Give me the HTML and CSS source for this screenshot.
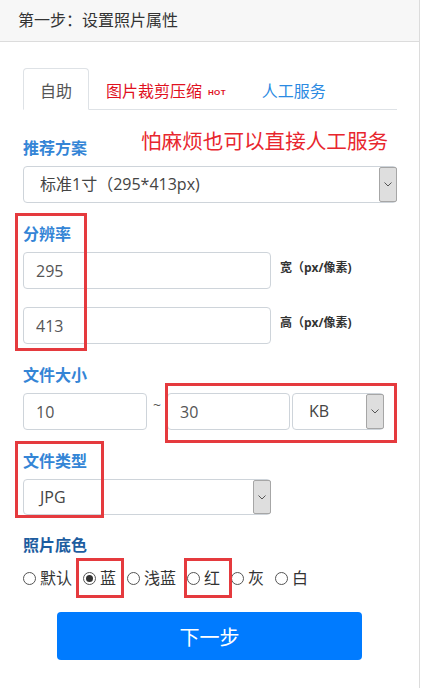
FILE: index.html
```html
<!DOCTYPE html>
<html lang="zh-CN">
<head>
<meta charset="utf-8">
<title>第一步：设置照片属性</title>
<link rel="stylesheet" href="styles.css">
</head>
<body>
<div class="page">
  <div class="header">第一步：设置照片属性</div>
  <div class="content">
    <div class="tabs">
      <div class="tab active">自助</div>
      <div class="tab red">图片裁剪压缩<span class="hot">HOT</span></div>
      <div class="tab blue">人工服务</div>
    </div>

    <div class="group g1">
      <div class="label-row">
        <div class="label">推荐方案</div>
        <div class="tip">怕麻烦也可以直接人工服务</div>
      </div>
      <div class="select full">
        <span class="value">标准1寸（295*413px)</span>
        <span class="arrow"><svg width="8" height="5" viewBox="0 0 8 5"><path d="M0.5 0.5 L4 4 L7.5 0.5" fill="none" stroke="#555" stroke-width="1"/></svg></span>
      </div>
    </div>

    <div class="group g2">
      <div class="label">分辨率</div>
      <div class="row first">
        <input class="input wide" type="text" value="295">
        <span class="unit">宽（px/像素)</span>
      </div>
      <div class="row second">
        <input class="input wide" type="text" value="413">
        <span class="unit">高（px/像素)</span>
      </div>
      <div class="mark m-res"></div>
    </div>

    <div class="group g3">
      <div class="label">文件大小</div>
      <div class="row first">
        <input class="input small" type="text" value="10">
        <span class="tilde">~</span>
        <input class="input small2" type="text" value="30">
        <div class="select kb">
          <span class="value">KB</span>
          <span class="arrow"><svg width="8" height="5" viewBox="0 0 8 5"><path d="M0.5 0.5 L4 4 L7.5 0.5" fill="none" stroke="#555" stroke-width="1"/></svg></span>
        </div>
      </div>
      <div class="mark m-size"></div>
    </div>

    <div class="group g4">
      <div class="label">文件类型</div>
      <div class="select type">
        <span class="value">JPG</span>
        <span class="arrow"><svg width="8" height="5" viewBox="0 0 8 5"><path d="M0.5 0.5 L4 4 L7.5 0.5" fill="none" stroke="#555" stroke-width="1"/></svg></span>
      </div>
      <div class="mark m-type"></div>
    </div>

    <div class="group g5">
      <div class="label dark">照片底色</div>
      <div class="radios">
        <label class="radio"><span class="circle"></span>默认</label>
        <label class="radio"><span class="circle checked"></span>蓝</label>
        <label class="radio"><span class="circle"></span>浅蓝</label>
        <label class="radio"><span class="circle"></span>红</label>
        <label class="radio"><span class="circle"></span>灰</label>
        <label class="radio"><span class="circle"></span>白</label>
      </div>
      <div class="mark m-blue"></div>
      <div class="mark m-red"></div>
    </div>

    <button class="next" type="button">下一步</button>
  </div>
</div>
</body>
</html>
```

FILE: styles.css
```css
* { box-sizing: border-box; }
html, body { margin: 0; padding: 0; background: #fff; }
body {
  font-family: "Open Sans", "Noto Sans CJK SC", sans-serif;
  color: #333;
  font-size: 16px;
}
.page {
  width: 420px;
  min-height: 688px;
  border-right: 1px solid #dcdcdc;
}
.header {
  height: 42px;
  line-height: 41px;
  padding-left: 18px;
  background: #f7f7f7;
  border-bottom: 1px solid #dcdcdc;
  color: #333;
  font-size: 16px;
}
.content {
  padding: 26px 22px 0 23px;
}
.tabs {
  display: flex;
  height: 42px;
  border-bottom: 1px solid #dee2e6;
}
.tab {
  height: 42px;
  padding: 4px 16px 0;
  line-height: 37px;
  border: 1px solid transparent;
  border-radius: 4px 4px 0 0;
  font-size: 16px;
  white-space: nowrap;
}
.tab.active {
  border-color: #dee2e6 #dee2e6 #fff;
  background: #fff;
  color: #555;
}
.tab.red { color: #e0101e; }
.tab.blue { color: #2b8ae2; }
.hot {
  font-size: 8px;
  font-weight: bold;
  margin-left: 6px;
  margin-right: 2px;
  font-family: "Liberation Sans", sans-serif;
  vertical-align: 2px;
  letter-spacing: 0.3px;
}
.group { position: relative; }
.g1 { margin-top: 26px; }
.g2 { margin-top: 19px; }
.g3 { margin-top: 19px; }
.g4 { margin-top: 19px; }
.g5 { margin-top: 18px; }
.label-row {
  display: flex;
  align-items: flex-end;
  height: 24px;
}
.label {
  font-size: 16px;
  font-weight: bold;
  line-height: 24px;
  color: #3485d6;
}
.label.dark { color: #1d5da0; }
.tip {
  margin-left: 54px;
  margin-bottom: 5px;
  font-size: 20.6px;
  line-height: 28px;
  color: #e8262e;
  white-space: nowrap;
}
.select {
  display: flex;
  height: 37px;
  margin-top: 6px;
  border: 1px solid #ced4da;
  border-radius: 4px;
  background: #fff;
}
.select .value {
  flex: 1;
  padding-left: 16px;
  line-height: 35px;
  color: #444;
  font-size: 16px;
  white-space: nowrap;
}
.select .arrow {
  width: 18px;
  margin: 0 -1px 0 0;
  border: 1px solid #a6a6a6;
  border-radius: 2px;
  background: #dedede;
  display: flex;
  align-items: center;
  justify-content: center;
}
.select.full { width: 374px; }
.select.type { width: 248px; height: 36px; }
.select.kb { width: 92px; margin-top: 0; margin-left: 2px; }
.row {
  display: flex;
  align-items: flex-start;
}
.row.first { margin-top: 6px; }
.row.second { margin-top: 18px; }
.input {
  height: 37px;
  border: 1px solid #ced4da;
  border-radius: 4px;
  padding: 0 0 0 12px;
  font-family: "Open Sans", "Noto Sans CJK SC", sans-serif;
  font-size: 16px;
  color: #555;
  background: #fff;
  outline: none;
}
.input.wide { width: 248px; }
.input.small { width: 124px; }
.input.small2 { width: 123px; }
.unit {
  margin-left: 9px;
  line-height: 32px;
  font-size: 12px;
  font-weight: bold;
  color: #333;
  white-space: nowrap;
}
.tilde {
  width: 20px;
  padding-left: 6px;
  line-height: 24px;
  font-size: 14px;
  color: #555;
}
.radios {
  display: flex;
  gap: 11px;
  margin-top: 9px;
  line-height: 24px;
}
.radio {
  display: flex;
  align-items: center;
  gap: 4px;
  font-size: 16px;
  color: #333;
}
.circle {
  width: 13px;
  height: 13px;
  border: 1px solid #555;
  border-radius: 50%;
  display: flex;
  align-items: center;
  justify-content: center;
}
.circle.checked::after {
  content: "";
  width: 7px;
  height: 7px;
  border-radius: 50%;
  background: #333;
}
.mark {
  position: absolute;
  border: 3px solid #e53a3e;
  pointer-events: none;
}
.m-res { left: -8px; top: -9px; width: 72px; height: 138px; }
.m-size { left: 142px; top: 20px; width: 232px; height: 60px; }
.m-type { left: -8px; top: -8px; width: 89px; height: 77px; }
.m-blue { left: 53px; top: 25px; width: 48px; height: 40px; }
.m-red { left: 161px; top: 25px; width: 48px; height: 40px; }
.next {
  display: block;
  width: 305px;
  height: 48px;
  margin: 22px 0 0 34px;
  border: none;
  border-radius: 4px;
  background: #007bff;
  color: #fff;
  font-family: "Noto Sans CJK SC", sans-serif;
  font-size: 20px;
}
```
